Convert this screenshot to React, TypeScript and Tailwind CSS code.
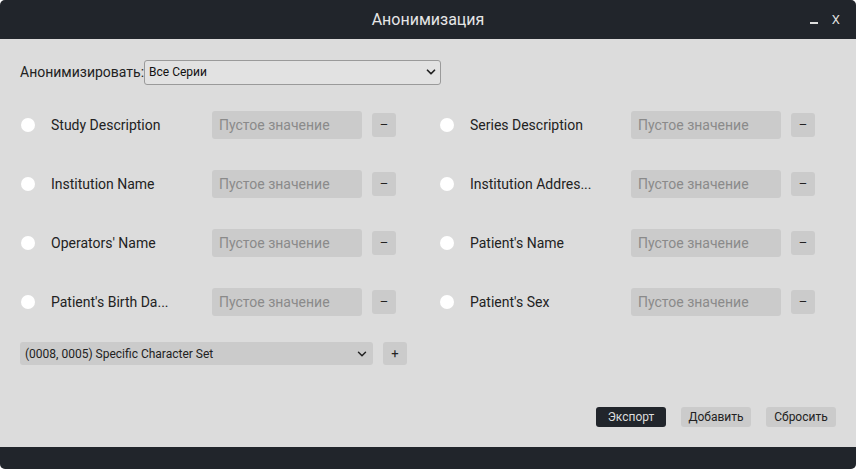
import { ChevronDown } from "lucide-react"

const fields = [
  ["Study Description", "Series Description"],
  ["Institution Name", "Institution Addres..."],
  ["Operators' Name", "Patient's Name"],
  ["Patient's Birth Da...", "Patient's Sex"],
]

function FieldRow({ label }: { label: string }) {
  return (
    <div className="flex h-[28px] items-center">
      <div className="h-[14px] w-[14px] rounded-full bg-white" />
      <div className="ml-[16px] w-[161px] truncate text-[14px] text-[#222]">{label}</div>
      <div className="flex h-[28px] w-[150px] items-center rounded-[3px] bg-[#cbcbcb] px-[7px] text-[14px] text-[#8a8a8a]">
        Пустое значение
      </div>
      <button className="ml-[10px] flex h-[24px] w-[24px] items-center justify-center rounded-[3px] bg-[#cbcbcb] text-[13px] text-[#222]">
        –
      </button>
    </div>
  )
}

export default function App() {
  return (
    <div className="h-[469px] w-[856px] bg-white font-['Roboto',sans-serif]">
      <div className="flex h-full w-full flex-col overflow-hidden rounded-[5px] bg-[#dcdcdc]">
        <div className="relative flex h-[39px] shrink-0 items-center justify-center bg-[#21252b]">
          <span className="text-[16px] text-[#e6e6e6]">Анонимизация</span>
          <span className="absolute right-[38px] top-[22px] h-[1.5px] w-[8px] bg-[#ddd]" />
          <span className="absolute right-[16px] top-[10px] text-[13px] text-[#ddd]">X</span>
        </div>

        <div className="flex-1 px-[20px]">
          <div className="mt-[21px] flex h-[24px] items-center">
            <span className="text-[14px] text-[#222]">Анонимизировать:</span>
            <div className="flex h-[25px] w-[297px] items-center justify-between rounded-[3px] border border-[#9a9a9a] bg-[#e2e2e2] pl-[4px] pr-[2px] text-[12px] text-[#111]">
              <span>Все Серии</span>
              <ChevronDown className="h-[14px] w-[14px] text-[#222]" strokeWidth={3} />
            </div>
          </div>

          <div className="mt-[27px] grid grid-cols-[376px_376px] gap-x-[43px] gap-y-[31px] pl-px">
            {fields.map((pair) =>
              pair.map((label) => <FieldRow key={label} label={label} />)
            )}
          </div>

          <div className="mt-[26px] flex items-center">
            <div className="flex h-[23px] w-[353px] items-center justify-between rounded-[3px] bg-[#cbcbcb] pl-[5px] pr-[4px] text-[12px] text-[#222]">
              <span>(0008, 0005) Specific Character Set</span>
              <ChevronDown className="h-[14px] w-[14px] text-[#222]" strokeWidth={2.5} />
            </div>
            <button className="ml-[10px] flex h-[23px] w-[24px] items-center justify-center rounded-[3px] bg-[#cbcbcb] text-[13px] text-[#222]">
              +
            </button>
          </div>

          <div className="mt-[42px] flex justify-end gap-[15px]">
            <button className="h-[20px] w-[70px] rounded-[3px] bg-[#21252b] text-[12px] text-[#ddd]">Экспорт</button>
            <button className="h-[20px] w-[70px] rounded-[3px] bg-[#cbcbcb] text-[12px] text-[#222]">Добавить</button>
            <button className="h-[20px] w-[70px] rounded-[3px] bg-[#cbcbcb] text-[12px] text-[#222]">Сбросить</button>
          </div>
        </div>

        <div className="h-[22px] shrink-0 bg-[#21252b]" />
      </div>
    </div>
  )
}
